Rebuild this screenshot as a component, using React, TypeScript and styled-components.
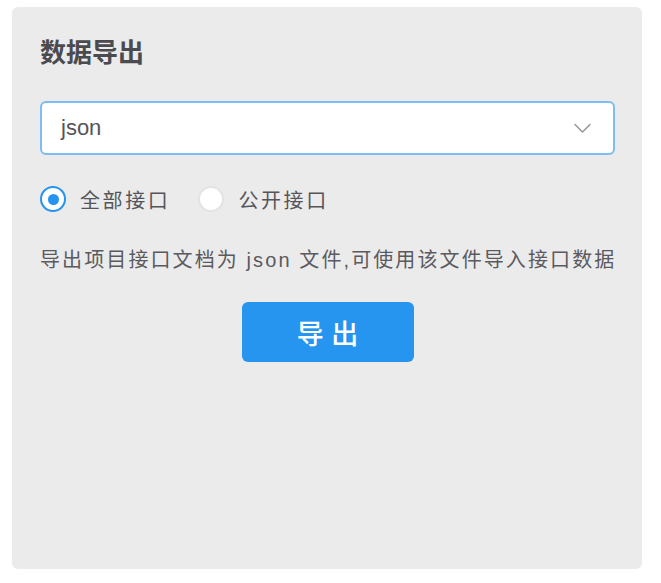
import React, { useState } from "react";
import styled, { createGlobalStyle } from "styled-components";

const GlobalStyle = createGlobalStyle`
  html, body {
    margin: 0;
    padding: 0;
    background: #ffffff;
    font-family: "Liberation Sans", "Noto Sans CJK SC", sans-serif;
  }
`;

const Panel = styled.section`
  box-sizing: border-box;
  width: 630px;
  height: 562px;
  margin: 7px 0 0 12px;
  padding: 30px 27px 0 28px;
  background: #ebebec;
  border-radius: 6px;
  display: flex;
  flex-direction: column;
`;

const Title = styled.h2`
  margin: 0;
  font-size: 26px;
  line-height: 32px;
  font-weight: 600;
  color: #4a4a4f;
`;

const Select = styled.div`
  box-sizing: border-box;
  margin-top: 32px;
  height: 54px;
  display: flex;
  align-items: center;
  justify-content: space-between;
  padding: 0 22px 0 19px;
  background: #ffffff;
  border: 2px solid #7cbdf4;
  border-radius: 6px;
  font-size: 22px;
  color: #55555a;
  cursor: pointer;
`;

const Chevron = () => (
  <svg width="17" height="11" viewBox="0 0 17 11">
    <polyline
      points="1,1.5 8.5,9 16,1.5"
      fill="none"
      stroke="#9a9a9e"
      strokeWidth="1.6"
      strokeLinecap="round"
      strokeLinejoin="round"
    />
  </svg>
);

const RadioRow = styled.div`
  margin-top: 30px;
  height: 28px;
  display: flex;
  align-items: center;
  gap: 28px;
`;

const RadioLabel = styled.label`
  display: flex;
  align-items: center;
  gap: 14px;
  font-size: 20px;
  letter-spacing: 2.6px;
  color: #55555a;
  cursor: pointer;
`;

const Circle = styled.span<{ $checked: boolean }>`
  box-sizing: border-box;
  width: 26px;
  height: 26px;
  border-radius: 50%;
  background: #ffffff;
  border: 2px solid ${(p) => (p.$checked ? "#2593f0" : "#e3e3e5")};
  display: flex;
  align-items: center;
  justify-content: center;

  &::after {
    content: "";
    width: 11px;
    height: 11px;
    border-radius: 50%;
    background: #2593f0;
    display: ${(p) => (p.$checked ? "block" : "none")};
  }
`;

const Desc = styled.p`
  margin: 33px 0 0;
  font-size: 20px;
  line-height: 28px;
  letter-spacing: 2.1px;
  color: #5a5a5f;
  white-space: nowrap;
`;

const ExportButton = styled.button`
  align-self: center;
  margin-top: 28px;
  width: 172px;
  height: 60px;
  border: none;
  border-radius: 6px;
  background: #2595f0;
  color: #ffffff;
  font-family: inherit;
  font-size: 27px;
  font-weight: 500;
  cursor: pointer;
`;

const options = ["全部接口", "公开接口"];

export default function App() {
  const [scope, setScope] = useState(0);

  return (
    <>
      <GlobalStyle />
      <Panel>
        <Title>数据导出</Title>
        <Select>
          <span>json</span>
          <Chevron />
        </Select>
        <RadioRow>
          {options.map((label, i) => (
            <RadioLabel key={label} onClick={() => setScope(i)}>
              <Circle $checked={scope === i} />
              {label}
            </RadioLabel>
          ))}
        </RadioRow>
        <Desc>导出项目接口文档为 json 文件,可使用该文件导入接口数据</Desc>
        <ExportButton>导 出</ExportButton>
      </Panel>
    </>
  );
}
